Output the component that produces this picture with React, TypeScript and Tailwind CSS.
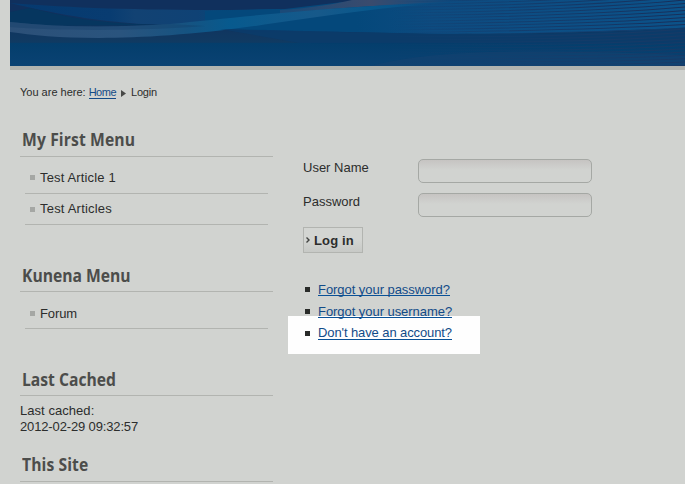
import React from "react";

function Banner() {
  const upper = Array.from({ length: 14 }, (_, i) => i);
  const lower = Array.from({ length: 12 }, (_, i) => i);
  return (
    <svg className="block h-[66px] w-[675px]" viewBox="10 0 675 66" preserveAspectRatio="none">
      <defs>
        <linearGradient id="base" gradientUnits="userSpaceOnUse" x1="0" y1="0" x2="0" y2="66">
          <stop offset="0" stopColor="#10305d" />
          <stop offset="0.2" stopColor="#10305d" />
          <stop offset="0.64" stopColor="#103a62" />
          <stop offset="0.66" stopColor="#043e6c" />
          <stop offset="1" stopColor="#0a4273" />
        </linearGradient>
        <linearGradient id="mid" gradientUnits="userSpaceOnUse" x1="10" y1="0" x2="260" y2="0">
          <stop offset="0" stopColor="#05396f" />
          <stop offset="0.4" stopColor="#083c71" />
          <stop offset="0.5" stopColor="#124273" />
          <stop offset="0.75" stopColor="#0f4275" />
          <stop offset="0.85" stopColor="#05477a" />
        </linearGradient>
        <linearGradient id="wave" gradientUnits="userSpaceOnUse" x1="180" y1="0" x2="685" y2="0">
          <stop offset="0" stopColor="#04487b" />
          <stop offset="0.35" stopColor="#04487b" />
          <stop offset="0.5" stopColor="#0d4b80" />
          <stop offset="1" stopColor="#0b5289" />
        </linearGradient>
        <linearGradient id="ribbon" gradientUnits="userSpaceOnUse" x1="10" y1="0" x2="450" y2="0">
          <stop offset="0" stopColor="#2c5078" />
          <stop offset="0.25" stopColor="#2a547e" />
          <stop offset="0.4" stopColor="#165381" />
          <stop offset="0.5" stopColor="#075a8e" />
          <stop offset="0.7" stopColor="#17598a" />
          <stop offset="0.82" stopColor="#08588c" />
          <stop offset="1" stopColor="#0b4b80" />
        </linearGradient>
        <linearGradient id="veil" gradientUnits="userSpaceOnUse" x1="290" y1="0" x2="450" y2="0">
          <stop offset="0" stopColor="#1b4a78" />
          <stop offset="0.5" stopColor="#3a4b6d" />
          <stop offset="1" stopColor="#0d4b80" />
        </linearGradient>
        <linearGradient id="fade" gradientUnits="userSpaceOnUse" x1="390" y1="0" x2="685" y2="0">
          <stop offset="0" stopColor="#153968" stopOpacity="0" />
          <stop offset="0.35" stopColor="#153968" stopOpacity="0.65" />
          <stop offset="1" stopColor="#172e59" />
        </linearGradient>
        <linearGradient id="low" gradientUnits="userSpaceOnUse" x1="380" y1="0" x2="685" y2="0">
          <stop offset="0" stopColor="#173f6e" stopOpacity="0" />
          <stop offset="1" stopColor="#183965" />
        </linearGradient>
        <clipPath id="above">
          <path d="M370 0 L685 0 L685 28 C600 33 500 34 370 33Z" />
        </clipPath>
        <clipPath id="below">
          <path d="M370 33 C500 34 600 33 685 28 L685 66 L370 66Z" />
        </clipPath>
      </defs>
      <rect x="10" width="675" height="66" fill="url(#base)" />
      <path d="M10 3 C75 8 130 10 230 10 L280 9 L280 22 L170 25 C110 24 60 15 10 3Z" fill="url(#mid)" />
      <path d="M30 8 C65 16 91 24 170 25 L10 26 L10 12Z" fill="#06365f" />
      <path d="M205 11 L285 9 L343 2 L420 0 L685 0 L685 28 C600 33 500 34 427 34 C350 32 280 31 215 29 L205 20Z" fill="url(#wave)" />
      <path d="M280 10 C310 8 335 4 352 0 L450 0 L450 3 C380 5 330 8 280 14Z" fill="url(#veil)" />
      <path d="M10 22 C65 28 121 27 170 24 C220 19 285 12 343 8 C385 5 420 3 450 2 L450 3 C390 6 330 15 275 23 C205 34 145 38 99 38 C60 38 31 35 10 32Z" fill="url(#ribbon)" />
      <path d="M10 22 C65 28 121 27 170 24 L205 26 C140 31 60 31 10 27Z" fill="#103d66" opacity=".35" />
      <path d="M220 29 C310 31 390 34 490 34 C560 34 625 32 685 28 L685 44 L300 43Z" fill="#0a3c6b" opacity=".8" />
      <path d="M370 66 C430 50 530 48 685 55 L685 66Z" fill="#15416f" opacity=".5" />
      <g clipPath="url(#above)">
        {upper.map((i) => (
          <path key={i} d={`M380 ${i * 2.8 + 2} C480 ${i * 2.8 + 1} 590 ${i * 3 - 3} 685 ${i * 3.5 - 14}`} fill="none" stroke="url(#fade)" strokeWidth="1.1" />
        ))}
      </g>
      <g clipPath="url(#below)">
        {lower.map((i) => (
          <path key={i} d={`M380 ${36 + i * 2.6} C480 ${38 + i * 2.6} 600 ${36 + i * 3} 685 ${29 + i * 3.3}`} fill="none" stroke="url(#low)" strokeWidth="1" />
        ))}
      </g>
    </svg>
  );
}

function Heading({ children, className }: { children: React.ReactNode; className: string }) {
  return (
    <h3 className={`flex w-[253px] items-end border-b border-[#b2b4b0] pl-[2px] font-['Open_Sans',sans-serif] text-[18px] font-bold text-[#4c4d4b] ${className}`}>
      <span className="block origin-left scale-x-[0.87] whitespace-nowrap">{children}</span>
    </h3>
  );
}

function MenuItem({ children, className }: { children: React.ReactNode; className: string }) {
  return (
    <li className={`mx-[5px] flex items-center border-b border-[#b2b4b0] pl-[5px] ${className}`}>
      <i className="mr-[5px] size-[5px] bg-[#a5a7a4]" />
      <span>{children}</span>
    </li>
  );
}

function Field({ label, type }: { label: string; type: string }) {
  return (
    <label className="flex h-[24px] w-[289px]">
      <span className="w-[115px] leading-[17px]">{label}</span>
      <input type={type} className="h-[24px] w-[174px] rounded-[5px] border border-[#a5a8a4] bg-linear-to-b from-[#c6c4c2] to-[#d1d3d0] to-45% px-2 outline-none" />
    </label>
  );
}

function HelpLink({ children, className }: { children: React.ReactNode; className: string }) {
  return (
    <li className="flex h-[22px] items-start">
      <i className="mr-[8px] mt-[5px] size-[5px] bg-[#292b29]" />
      <a className={`border-b border-[#095197] leading-[13px] text-[#124b88] ${className}`}>{children}</a>
    </li>
  );
}

export default function App() {
  return (
    <div className="h-[484px] w-[685px] overflow-hidden bg-[#d1d3d0] pl-[10px] font-['Liberation_Sans',Arial,sans-serif] text-[13px] text-[#2c2d2c]">
      <header className="h-[70px] border-b-4 border-[#b2b4b0]">
        <Banner />
      </header>
      <nav className="flex h-[44px] items-center pl-[10px] text-[11px] leading-[14px]">
        <span>You are here:</span>
        <a className="ml-[3px] h-[13px] border-b border-[#154b87] leading-[13px] tracking-[-0.5px] text-[#154b87]">Home</a>
        <svg className="ml-[5px] mt-[2px]" width="5" height="7" viewBox="0 0 5 7"><path d="M0 0L5 3.5L0 7Z" fill="#484947" /></svg>
        <span className="ml-[5px] tracking-[-0.2px]">Login</span>
      </nav>
      <div className="flex pl-[10px]">
        <aside className="w-[253px] shrink-0">
          <Heading className="h-[43px] leading-[33px] tracking-[0.15px]">My First Menu</Heading>
          <ul className="pt-[5px]">
            <MenuItem className="h-[32px] tracking-[0.15px]">Test Article 1</MenuItem>
            <MenuItem className="h-[31px] tracking-[0.2px]">Test Articles</MenuItem>
          </ul>
          <Heading className="h-[67px] leading-[32px]">Kunena Menu</Heading>
          <ul className="pt-[5px]">
            <MenuItem className="h-[32px] pt-[2px] tracking-[-0.1px]">Forum</MenuItem>
          </ul>
          <Heading className="h-[67px] leading-[31px]">Last Cached</Heading>
          <p className="pt-[7px] leading-[16px]"><span className="tracking-[0.05px]">Last cached:</span><br /><span className="tracking-[-0.14px]">2012-02-29 09:32:57</span></p>
          <Heading className="h-[47px] leading-[33px] tracking-[0.1px]">This Site</Heading>
        </aside>
        <main className="relative ml-[30px] pt-[45px]">
          <form className="flex flex-col items-start gap-[10px]">
            <Field label="User Name" type="text" />
            <Field label="Password" type="password" />
            <button type="button" className="flex h-[26px] w-[60px] items-center border border-[#b2b4b0] bg-linear-to-b from-[#d3d5d2] from-50% to-[#c7c9c6] pl-[2px] pt-px font-bold">
              <svg className="mb-[2px]" width="4" height="6" viewBox="0 0 4 6" fill="none" stroke="#414341" strokeWidth="1.4"><path d="M.5 .5L3 3L.5 5.5" /></svg>
              <span className="ml-[4px] tracking-[0.15px]">Log in</span>
            </button>
          </form>
          <div className="absolute left-[-15px] top-[202px] h-[38px] w-[192px] bg-[#fefefe]" />
          <ul className="relative mt-[29px] pl-[2px]">
            <HelpLink className="mt-px h-[13px] tracking-[-0.05px]">Forgot your password?</HelpLink>
            <HelpLink className="mt-px h-[13px] tracking-[-0.05px]">Forgot your username?</HelpLink>
            <HelpLink className="h-[14px] tracking-[-0.1px]">Don't have an account?</HelpLink>
          </ul>
        </main>
      </div>
    </div>
  );
}
